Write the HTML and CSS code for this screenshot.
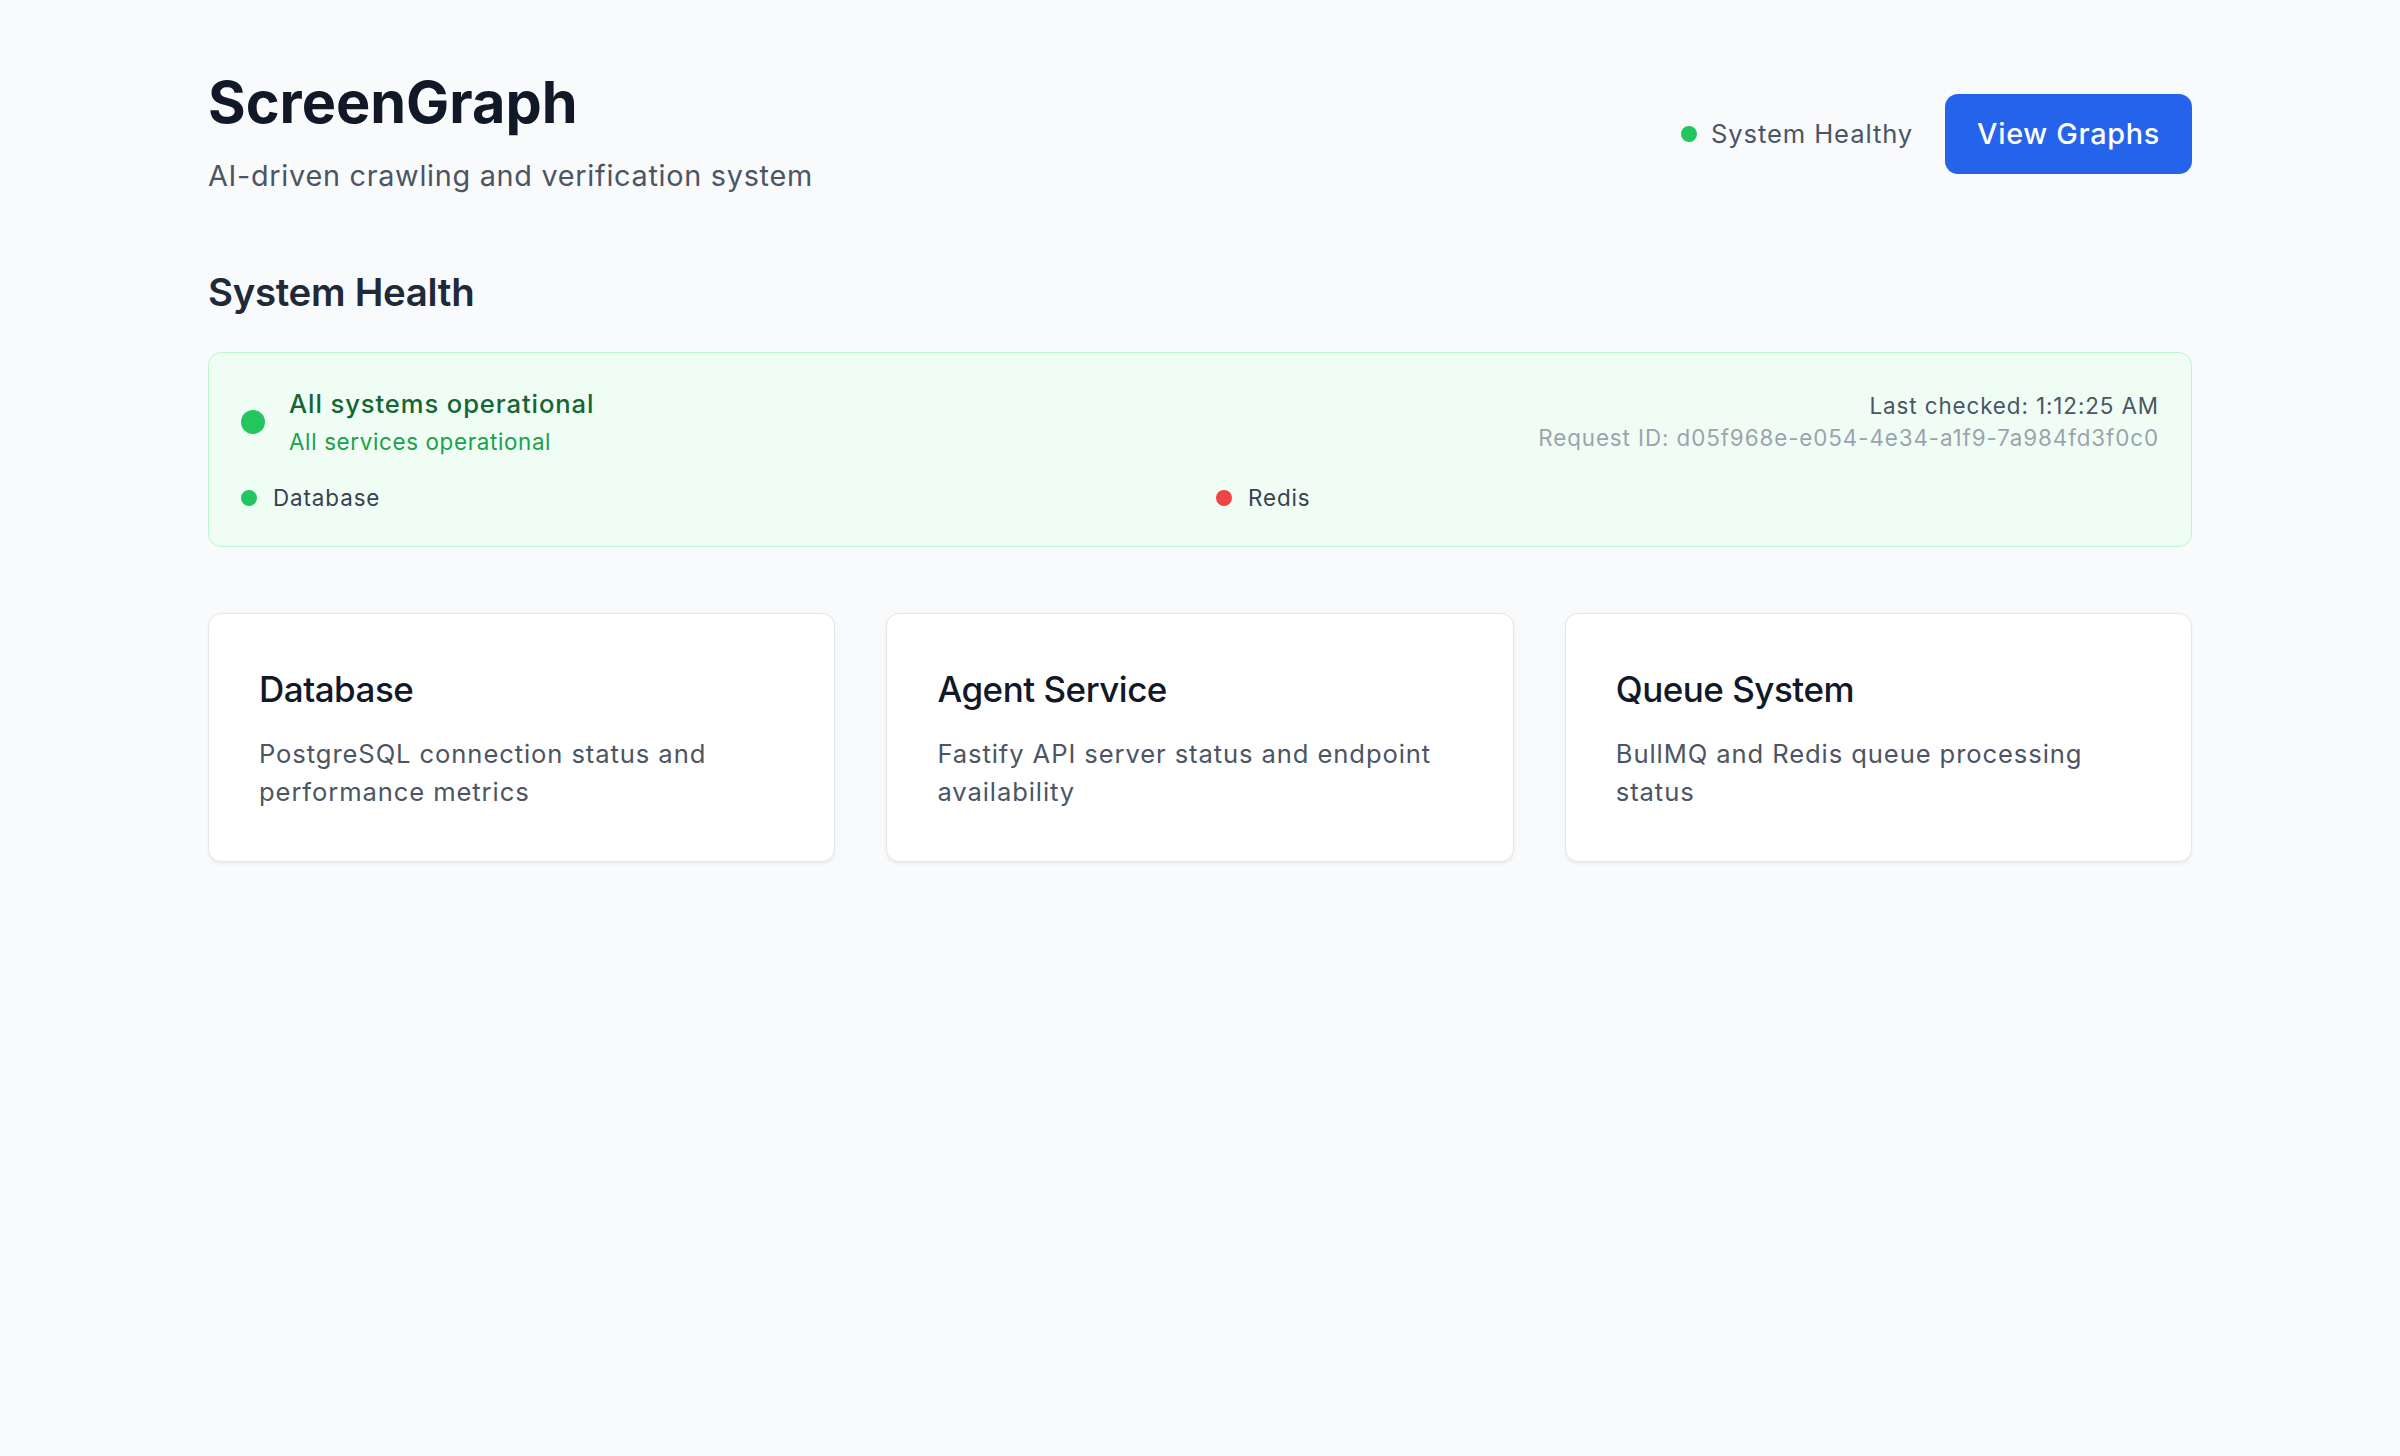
FILE: index.html
```html
<!DOCTYPE html>
<html lang="en">
<head>
<meta charset="utf-8">
<title>ScreenGraph</title>
<link rel="stylesheet" href="styles.css">
</head>
<body>
<main class="page">
  <header class="header">
    <div class="brand">
      <h1 class="brand-title">ScreenGraph</h1>
      <p class="brand-subtitle">AI-driven crawling and verification system</p>
    </div>
    <div class="header-actions">
      <div class="health-pill">
        <span class="dot dot-green"></span>
        <span class="health-pill-text">System Healthy</span>
      </div>
      <a class="btn-primary" href="#">View Graphs</a>
    </div>
  </header>

  <section class="health">
    <h2 class="section-title">System Health</h2>
    <div class="health-banner">
      <div class="banner-top">
        <div class="banner-status">
          <span class="dot-lg"></span>
          <div class="banner-status-text">
            <div class="banner-title">All systems operational</div>
            <div class="banner-sub">All services operational</div>
          </div>
        </div>
        <div class="banner-meta">
          <div class="meta-checked">Last checked: 1:12:25 AM</div>
          <div class="meta-id">Request ID: d05f968e-e054-4e34-a1f9-7a984fd3f0c0</div>
        </div>
      </div>
      <div class="services">
        <div class="service"><span class="dot dot-green"></span><span class="service-name">Database</span></div>
        <div class="service"><span class="dot dot-red"></span><span class="service-name">Redis</span></div>
      </div>
    </div>
  </section>

  <section class="cards">
    <div class="card">
      <h3 class="card-title">Database</h3>
      <p class="card-desc">PostgreSQL connection status and performance metrics</p>
    </div>
    <div class="card">
      <h3 class="card-title">Agent Service</h3>
      <p class="card-desc">Fastify API server status and endpoint availability</p>
    </div>
    <div class="card">
      <h3 class="card-title">Queue System</h3>
      <p class="card-desc">BullMQ and Redis queue processing status</p>
    </div>
  </section>
</main>
</body>
</html>
```

FILE: styles.css
```css
* { box-sizing: border-box; }

html, body {
  margin: 0;
  padding: 0;
}

body {
  background: #f9fafb;
  font-family: "Inter", "Noto Sans", "Liberation Sans", sans-serif;
  color: #111827;
  min-height: 1456px;
}

.page {
  width: 1984px;
  margin: 0 auto;
  padding-top: 70px;
}

.header {
  display: flex;
  justify-content: space-between;
  align-items: center;
}

.brand-title {
  margin: 0;
  font-size: 57.6px;
  line-height: 64px;
  font-weight: 700;
  color: #111827;
  letter-spacing: 0;
}

.brand-subtitle {
  margin: 20px 0 0;
  font-size: 28.8px;
  line-height: 44.8px;
  color: #4b5563;
  letter-spacing: 0.72px;
}

.header-actions {
  display: flex;
  align-items: center;
  gap: 32px;
}

.health-pill {
  display: flex;
  align-items: center;
  gap: 14px;
}

.health-pill-text {
  font-size: 25.6px;
  line-height: 38.4px;
  color: #4b5563;
  letter-spacing: 0.9px;
}

.dot {
  display: inline-block;
  width: 16px;
  height: 16px;
  border-radius: 50%;
  flex: none;
}

.dot-green { background: #22c55e; }
.dot-red { background: #ef4444; }

.btn-primary {
  display: inline-block;
  background: #2563eb;
  color: #ffffff;
  text-decoration: none;
  font-size: 28.8px;
  line-height: 44.8px;
  font-weight: 500;
  letter-spacing: 0.7px;
  padding: 17.6px 32px;
  border-radius: 13px;
}

.health {
  margin-top: 68px;
}

.section-title {
  margin: 0;
  font-size: 38.4px;
  line-height: 51.2px;
  font-weight: 600;
  color: #1f2937;
  letter-spacing: -0.3px;
}

.health-banner {
  margin-top: 34px;
  background: #f0fdf4;
  border: 1.6px solid #bbf7d0;
  border-radius: 13px;
  padding: 32px;
}

.banner-top {
  display: flex;
  justify-content: space-between;
  align-items: flex-start;
}

.banner-status {
  display: flex;
  align-items: center;
  gap: 24px;
}

.dot-lg {
  width: 24px;
  height: 24px;
  border-radius: 50%;
  background: #22c55e;
  flex: none;
}

.banner-title {
  font-size: 25.6px;
  line-height: 38.4px;
  font-weight: 500;
  color: #166534;
  letter-spacing: 0.9px;
}

.banner-sub {
  margin-top: 3px;
  font-size: 22.4px;
  line-height: 32px;
  color: #16a34a;
  letter-spacing: 0.64px;
}

.banner-meta {
  padding-top: 4.8px;
  text-align: right;
  font-size: 22.4px;
  line-height: 32px;
  letter-spacing: 0.9px;
}

.meta-checked { color: #4b5563; }
.meta-id { color: #9ca3af; }

.services {
  margin-top: 24px;
  display: grid;
  grid-template-columns: 1fr 1fr;
  column-gap: 32px;
}

.service {
  display: flex;
  align-items: center;
  gap: 16px;
}

.service-name {
  font-size: 22.4px;
  line-height: 32px;
  color: #374151;
  letter-spacing: 0.9px;
}

.cards {
  margin-top: 65.5px;
  display: grid;
  grid-template-columns: repeat(3, 1fr);
  gap: 51.2px;
}

.card {
  background: #ffffff;
  border: 1.6px solid #e5e7eb;
  border-radius: 13px;
  box-shadow: 0 1.6px 3px rgba(0, 0, 0, 0.06);
  padding: 50px;
}

.card-title {
  margin: 0;
  font-size: 35px;
  line-height: 51.2px;
  font-weight: 500;
  color: #111827;
  letter-spacing: -0.5px;
}

.card-desc {
  margin: 19.5px 0 0;
  font-size: 25.6px;
  line-height: 38.4px;
  color: #4b5563;
  letter-spacing: 0.9px;
}
```
